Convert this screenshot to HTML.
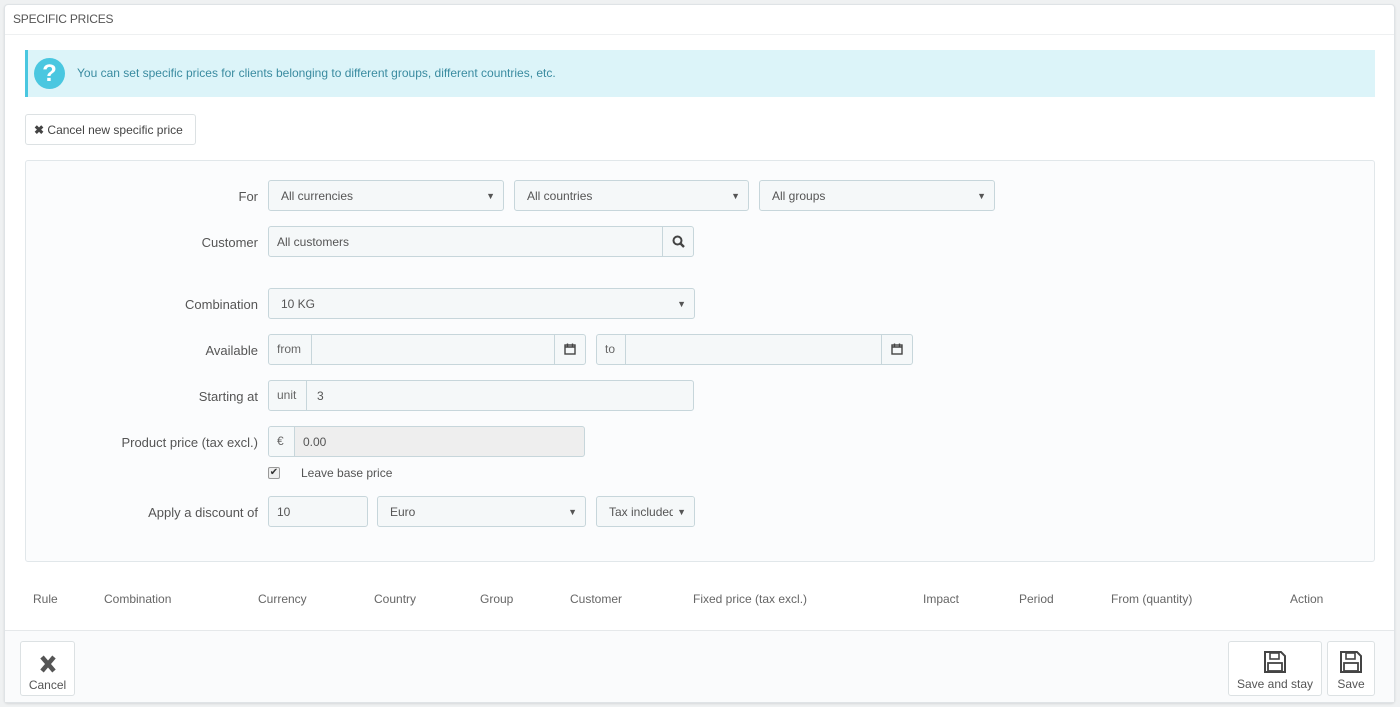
<!DOCTYPE html>
<html><head><meta charset="utf-8"><style>
*{box-sizing:border-box;margin:0;padding:0}
body{width:1400px;height:707px;background:#eff1f2;font-family:"Liberation Sans",sans-serif;font-size:12px;color:#555;position:relative;overflow:hidden}
.a{position:absolute}
.panel{left:4px;top:4px;width:1391px;height:699px;background:#fff;border:1px solid #dfe3e6;border-radius:4px;box-shadow:0 1px 2px rgba(0,0,0,.1)}
.inp{position:absolute;height:31px;background:#f5f8f9;border:1px solid #c7d6db;border-radius:3px;font-size:12px;color:#555;line-height:31px;padding-left:12px;overflow:hidden;white-space:nowrap}
.lbl{position:absolute;text-align:right;width:220px;left:38px;font-size:13px;color:#555}
.arr{position:absolute;right:8px;top:0;font-size:9px;color:#555}
.add{position:absolute;top:0;height:29px;border-right:1px solid #c7d6db;padding:0 10px 0 8px;font-size:12px;line-height:29px;color:#666}
.th{position:absolute;top:592px;font-size:12px;color:#666}
</style></head><body>
<div class="a panel"></div>
<div class="a" style="left:13px;top:12px;font-size:12px;color:#555;letter-spacing:-.2px">SPECIFIC PRICES</div>
<div class="a" style="left:5px;top:34px;width:1389px;height:1px;background:#eef0f1"></div>
<div class="a" style="left:25px;top:50px;width:1350px;height:47px;background:#dcf4f9;border-left:3px solid #4ac7e0"></div>
<div class="a" style="left:34px;top:58px;width:31px;height:31px;border-radius:50%;background:#4ac7e0;color:#fff;font-weight:bold;font-size:24px;text-align:center;line-height:31px">?</div>
<div class="a" style="left:77px;top:66px;font-size:12px;color:#3a8ba0">You can set specific prices for clients belonging to different groups, different countries, etc.</div>
<div class="a" style="left:25px;top:114px;width:171px;height:31px;border:1px solid #dce1e3;border-radius:3px;font-size:12px;line-height:31px;padding-left:8px;color:#444"><b>✖</b> Cancel new specific price</div>
<div class="a" style="left:25px;top:160px;width:1350px;height:402px;background:#fbfcfd;border:1px solid #e1e7ea;border-radius:3px"></div>

<div class="lbl" style="top:189px">For</div>
<div class="inp" style="left:268px;top:180px;width:236px">All currencies<span class="arr">▼</span></div>
<div class="inp" style="left:514px;top:180px;width:235px">All countries<span class="arr">▼</span></div>
<div class="inp" style="left:759px;top:180px;width:236px">All groups<span class="arr">▼</span></div>

<div class="lbl" style="top:235px">Customer</div>
<div class="inp" style="left:268px;top:226px;width:426px;padding-left:8px">All customers<span style="position:absolute;right:0;top:0;width:31px;height:29px;border-left:1px solid #c7d6db;text-align:center">
<svg width="13" height="13" viewBox="0 0 13 13" style="margin-top:8px"><circle cx="5.5" cy="5.5" r="4" fill="none" stroke="#444" stroke-width="2"/><path d="M8.5 8.5L12 12" stroke="#444" stroke-width="2.4"/></svg></span></div>

<div class="lbl" style="top:297px">Combination</div>
<div class="inp" style="left:268px;top:288px;width:427px">10 KG<span class="arr">▼</span></div>

<div class="lbl" style="top:343px">Available</div>
<div class="inp" style="left:268px;top:334px;width:318px;padding:0"><span class="add" style="left:0">from</span><span style="position:absolute;right:0;top:0;width:31px;height:29px;border-left:1px solid #c7d6db;text-align:center"><svg width="12" height="12" viewBox="0 0 12 12" style="margin-top:8px"><rect x="1" y="2" width="10" height="9" fill="none" stroke="#444" stroke-width="1.4"/><path d="M1 4h10M3.5 0.5v3M8.5 0.5v3" stroke="#444" stroke-width="1.4"/></svg></span></div>
<div class="inp" style="left:596px;top:334px;width:317px;padding:0"><span class="add" style="left:0">to</span><span style="position:absolute;right:0;top:0;width:31px;height:29px;border-left:1px solid #c7d6db;text-align:center"><svg width="12" height="12" viewBox="0 0 12 12" style="margin-top:8px"><rect x="1" y="2" width="10" height="9" fill="none" stroke="#444" stroke-width="1.4"/><path d="M1 4h10M3.5 0.5v3M8.5 0.5v3" stroke="#444" stroke-width="1.4"/></svg></span></div>

<div class="lbl" style="top:389px">Starting at</div>
<div class="inp" style="left:268px;top:380px;width:426px;padding:0"><span class="add" style="left:0">unit</span><span style="position:absolute;left:48px">3</span></div>

<div class="lbl" style="top:435px">Product price (tax excl.)</div>
<div class="inp" style="left:268px;top:426px;width:317px;padding:0;background:#eeeeee"><span class="add" style="left:0;background:#f5f8f9">€</span><span style="position:absolute;left:34px">0.00</span></div>
<div class="a" style="left:268px;top:467px;width:12px;height:12px;border:1px solid #999;border-radius:2px;background:#eee;font-size:10px;line-height:10px;text-align:center;color:#333">✔</div>
<div class="a" style="left:301px;top:466px;font-size:12px;color:#555">Leave base price</div>

<div class="lbl" style="top:505px">Apply a discount of</div>
<div class="inp" style="left:268px;top:496px;width:100px;padding-left:8px">10</div>
<div class="inp" style="left:377px;top:496px;width:209px">Euro<span class="arr">▼</span></div>
<div class="inp" style="left:596px;top:496px;width:99px">Tax included<span class="arr" style="background:#f5f8f9;padding-left:4px;right:0;padding-right:8px">▼</span></div>

<div class="th" style="left:33px">Rule</div>
<div class="th" style="left:104px">Combination</div>
<div class="th" style="left:258px">Currency</div>
<div class="th" style="left:374px">Country</div>
<div class="th" style="left:480px">Group</div>
<div class="th" style="left:570px">Customer</div>
<div class="th" style="left:693px">Fixed price (tax excl.)</div>
<div class="th" style="left:923px">Impact</div>
<div class="th" style="left:1019px">Period</div>
<div class="th" style="left:1111px">From (quantity)</div>
<div class="th" style="left:1290px">Action</div>

<div class="a" style="left:5px;top:630px;width:1389px;height:72px;background:#fafbfc;border-top:1px solid #e5e8ea"></div>
<div class="a" style="left:20px;top:641px;width:55px;height:55px;background:#fff;border:1px solid #dce1e3;border-radius:3px;text-align:center;font-size:12px;color:#555">
<svg width="18" height="20" viewBox="0 0 18 20" style="margin-top:12px"><path d="M3 3L15 17M15 3L3 17" stroke="#555" stroke-width="4.5"/></svg><div style="margin-top:1px">Cancel</div></div>
<div class="a" style="left:1228px;top:641px;width:94px;height:55px;background:#fff;border:1px solid #dce1e3;border-radius:3px;text-align:center;font-size:12px;color:#555">
<svg width="24" height="24" viewBox="0 0 24 24" style="margin-top:8px"><path d="M2 2h16l4 4v16H2z" fill="none" stroke="#444" stroke-width="2"/><rect x="7" y="3" width="9" height="6" fill="none" stroke="#444" stroke-width="1.6"/><rect x="5" y="13" width="14" height="8" fill="none" stroke="#444" stroke-width="1.8"/></svg><div>Save and stay</div></div>
<div class="a" style="left:1327px;top:641px;width:48px;height:55px;background:#fff;border:1px solid #dce1e3;border-radius:3px;text-align:center;font-size:12px;color:#555">
<svg width="24" height="24" viewBox="0 0 24 24" style="margin-top:8px"><path d="M2 2h16l4 4v16H2z" fill="none" stroke="#444" stroke-width="2"/><rect x="7" y="3" width="9" height="6" fill="none" stroke="#444" stroke-width="1.6"/><rect x="5" y="13" width="14" height="8" fill="none" stroke="#444" stroke-width="1.8"/></svg><div>Save</div></div>
</body></html>
